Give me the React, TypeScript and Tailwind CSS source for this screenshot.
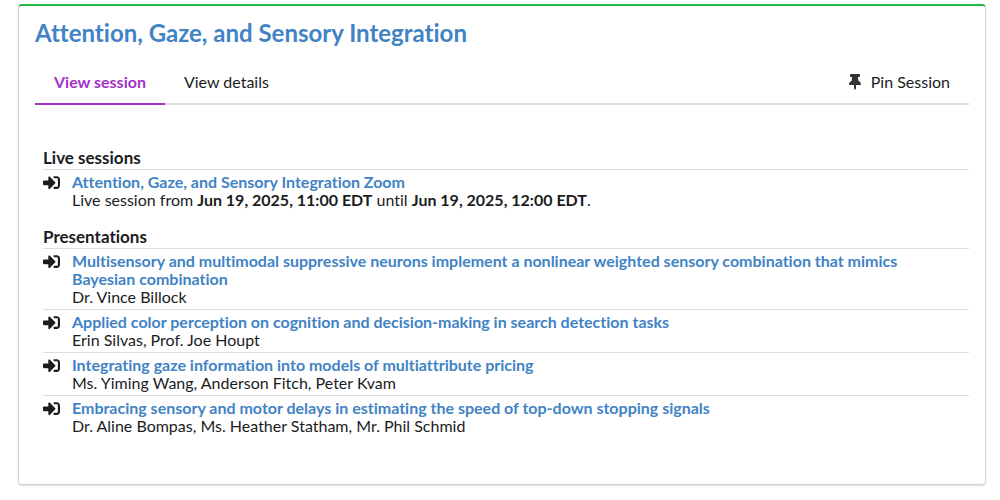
import React, { useState } from "react";
import { FaSignInAlt, FaThumbtack } from "react-icons/fa";

const presentations = [
  {
    title: "Multisensory and multimodal suppressive neurons implement a nonlinear weighted sensory combination that mimics Bayesian combination",
    authors: "Dr. Vince Billock",
  },
  {
    title: "Applied color perception on cognition and decision-making in search detection tasks",
    authors: "Erin Silvas, Prof. Joe Houpt",
  },
  {
    title: "Integrating gaze information into models of multiattribute pricing",
    authors: "Ms. Yiming Wang, Anderson Fitch, Peter Kvam",
  },
  {
    title: "Embracing sensory and motor delays in estimating the speed of top-down stopping signals",
    authors: "Dr. Aline Bompas, Ms. Heather Statham, Mr. Phil Schmid",
  },
];

const Item = ({ title, children }: { title: string; children: React.ReactNode }) => (
  <li className="flex border-t border-[#dededf] py-[3px] pr-4">
    <FaSignInAlt className="mt-px mr-3 size-[17px] shrink-0" />
    <div>
      <a href="#" className="block font-bold text-[#4183c4]">{title}</a>
      <div>{children}</div>
    </div>
  </li>
);

const App = () => {
  const [tab, setTab] = useState("session");

  const tabClass = (name: string) =>
    `-mb-0.5 border-b-2 px-[19px] py-3 ${
      tab === name ? "border-[#a333c8] font-bold text-[#a333c8]" : "border-transparent"
    }`;

  return (
    <div className="bg-white pt-1 pr-[14px] pb-3 pl-[18px] font-['Lato',sans-serif] text-base leading-[18px] text-[#1b1c1d] [font-variant-ligatures:none]">
      <div className="rounded border border-t-2 border-[#d4d4d5] border-t-[#21ba45] px-4 pt-[13px] pb-[46px] shadow-[0_1px_2px_0_rgba(34,36,38,0.15)]">
        <h2 className="text-2xl leading-7 font-bold text-[#4183c4]">Attention, Gaze, and Sensory Integration</h2>

        {/* tabs */}
        <div className="mt-[14px] flex border-b-2 border-[#dededf]">
          <button className={tabClass("session")} onClick={() => setTab("session")}>View session</button>
          <button className={tabClass("details")} onClick={() => setTab("details")}>View details</button>
          <button className="ml-auto flex items-center gap-2 px-[19px]">
            <FaThumbtack className="size-4 text-[#333333]" />
            Pin Session
          </button>
        </div>

        {/* session content */}
        <div className="mt-11 pl-2">
          <h3 className="mb-0.5 text-[17px] leading-[18px] font-bold">Live sessions</h3>
          <ul>
            <Item title="Attention, Gaze, and Sensory Integration Zoom">
              Live session from <b>Jun 19, 2025, 11:00 EDT</b> until <b>Jun 19, 2025, 12:00 EDT</b>.
            </Item>
          </ul>
          <h3 className="mt-4 mb-0.5 text-[17px] leading-[18px] font-bold">Presentations</h3>
          <ul>
            {presentations.map((p) => (
              <Item key={p.title} title={p.title}>{p.authors}</Item>
            ))}
          </ul>
        </div>
      </div>
    </div>
  );
};

export default App;
